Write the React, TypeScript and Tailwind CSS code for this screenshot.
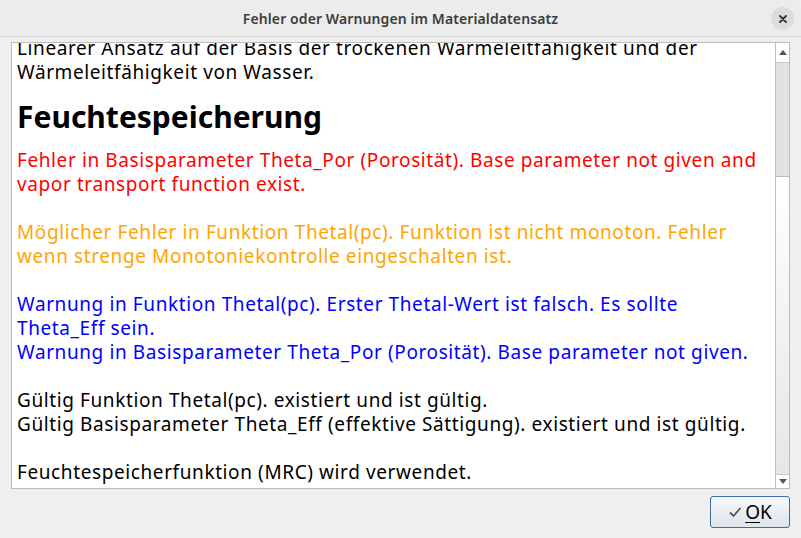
import React from "react";

const font = { fontFamily: '"Noto Sans", "Open Sans", sans-serif' };

export default function App() {
  return (
    <div className="w-[801px] h-[538px] bg-[#efefef] flex flex-col overflow-hidden" style={font}>
      {/* Title bar */}
      <div className="h-[37px] shrink-0 flex items-center justify-center relative border-b border-[#d2d2d2] bg-[#ececec] rounded-tr-[10px]">
        <span className="text-[14px] tracking-[0.1px] font-semibold text-[#3d3d3d]">Fehler oder Warnungen im Materialdatensatz</span>
        <div className="absolute right-[7px] top-[7px] w-[23px] h-[23px] rounded-full bg-[#dcdcdc] flex items-center justify-center">
          <svg width="10" height="10" viewBox="0 0 10 10">
            <path d="M2 2 L8 8 M8 2 L2 8" stroke="#3a3a3a" strokeWidth="2" strokeLinecap="round" />
          </svg>
        </div>
      </div>

      {/* Scroll pane */}
      <div className="mt-[5px] mx-[11px] h-[447px] border border-[#bcbcbc] bg-white flex">
        <div className="flex-1 overflow-hidden pl-[5px]">
          <div className="mt-[-7px] text-[19px] tracking-[0.6px] leading-[24px] text-black whitespace-nowrap">
            <div>Linearer Ansatz auf der Basis der trockenen Wärmeleitfähigkeit und der</div>
            <div>Wärmeleitfähigkeit von Wasser.</div>
            <div className="text-[30px] tracking-normal leading-[36px] font-bold mt-[15px] mb-[13px]">Feuchtespeicherung</div>
            <div className="text-[#ff0000]">
              <div>Fehler in Basisparameter Theta_Por (Porosität). Base parameter not given and</div>
              <div>vapor transport function exist.</div>
            </div>
            <div className="h-[24px]" />
            <div className="text-[#ffa500]">
              <div>Möglicher Fehler in Funktion Thetal(pc). Funktion ist nicht monoton. Fehler</div>
              <div>wenn strenge Monotoniekontrolle eingeschalten ist.</div>
            </div>
            <div className="h-[24px]" />
            <div className="text-[#0000ff]">
              <div>Warnung in Funktion Thetal(pc). Erster Thetal-Wert ist falsch. Es sollte</div>
              <div>Theta_Eff sein.</div>
              <div>Warnung in Basisparameter Theta_Por (Porosität). Base parameter not given.</div>
            </div>
            <div className="h-[24px]" />
            <div>Gültig Funktion Thetal(pc). existiert und ist gültig.</div>
            <div>Gültig Basisparameter Theta_Eff (effektive Sättigung). existiert und ist gültig.</div>
            <div className="h-[24px]" />
            <div>Feuchtespeicherfunktion (MRC) wird verwendet.</div>
          </div>
        </div>
        {/* Scrollbar */}
        <div className="w-[14px] border-l border-[#bcbcbc] flex flex-col">
          <div className="h-[20px] flex items-center justify-center bg-white border-b border-[#c8c8c8]">
            <svg width="8" height="5" viewBox="0 0 8 5"><path d="M0 5 L4 0 L8 5 Z" fill="#555" /></svg>
          </div>
          <div className="h-[114px] bg-[#e2e2e2] border-b border-[#bcbcbc]" />
          <div className="flex-1 bg-gradient-to-b from-white to-[#e6e6e6]" />
          <div className="h-[14px] flex items-center justify-center bg-white border-t border-[#c8c8c8]">
            <svg width="8" height="5" viewBox="0 0 8 5"><path d="M0 0 L4 5 L8 0 Z" fill="#555" /></svg>
          </div>
        </div>
      </div>

      {/* Button row */}
      <div className="flex justify-end pr-[11px] pt-[7px]">
        <button className="w-[80px] h-[32px] rounded-[3px] border border-[#3b6f9d] bg-gradient-to-b from-[#f6f8fa] to-[#dde4eb] flex items-center justify-center gap-[3px] text-[19px] text-black">
          <svg width="14" height="12" viewBox="0 0 14 12">
            <path d="M2 6.5 L5.5 10 L12.5 2" stroke="#555" strokeWidth="1.8" fill="none" />
          </svg>
          <span><span className="underline underline-offset-[3px]">O</span>K</span>
        </button>
      </div>
    </div>
  );
}
